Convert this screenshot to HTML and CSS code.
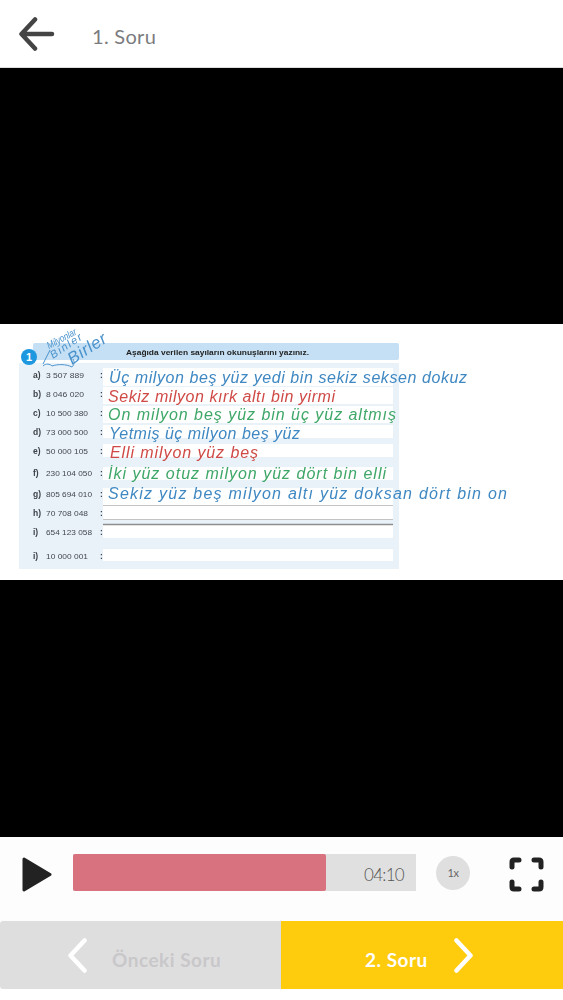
FILE: index.html
```html
<!DOCTYPE html>
<html lang="tr">
<head>
<meta charset="utf-8">
<title>1. Soru</title>
<link rel="stylesheet" href="styles.css">
</head>
<body>
<div class="app">
  <header class="topbar">
    <svg class="back" viewBox="0 0 36 34"><path d="M33 17H3M16 2.500L2.500 17L16 31.500"/></svg>
    <span class="title">1. Soru</span>
  </header>
  <main class="video">
    <svg class="sheet" viewBox="0 0 563 256">
      <rect class="panel" x="19" y="39" width="380" height="206"/>
      <rect class="band" x="33" y="19" width="366" height="17" rx="2"/>
      <rect class="box" x="103" y="44" width="290" height="18"/>
      <rect class="box" x="103" y="63" width="290" height="17"/>
      <rect class="box" x="103" y="82" width="290" height="17"/>
      <rect class="box" x="103" y="101" width="290" height="13"/>
      <rect class="box" x="103" y="120" width="290" height="13"/>
      <rect class="box" x="103" y="143" width="290" height="13"/>
      <rect class="box" x="103" y="164" width="290" height="17"/>
      <rect class="box" x="103" y="182" width="290" height="13"/>
      <rect class="box" x="103" y="201" width="290" height="13"/>
      <rect class="box" x="103" y="225" width="290" height="12"/>
      <path class="rule" d="M103 181.500H393M103 195.500H393"/>
      <path class="rule-dark" d="M103 200.500H393"/>
      <circle class="badge" cx="29" cy="33" r="8"/>
      <text class="badge-num" x="29" y="37" text-anchor="middle">1</text>
      <text class="heading" x="126" y="31" textLength="183" lengthAdjust="spacingAndGlyphs">Aşağıda verilen sayıların okunuşlarını yazınız.</text>

      <g class="labels">
        <text x="33" y="54">a)</text><text class="num" x="46" y="54" textLength="38" lengthAdjust="spacingAndGlyphs">3 507 889</text><text x="100" y="54">:</text>
        <text x="33" y="73">b)</text><text class="num" x="46" y="73" textLength="38" lengthAdjust="spacingAndGlyphs">8 046 020</text><text x="100" y="73">:</text>
        <text x="33" y="92">c)</text><text class="num" x="46" y="92" textLength="42" lengthAdjust="spacingAndGlyphs">10 500 380</text><text x="100" y="92">:</text>
        <text x="33" y="111">d)</text><text class="num" x="46" y="111" textLength="42" lengthAdjust="spacingAndGlyphs">73 000 500</text><text x="100" y="111">:</text>
        <text x="33" y="130">e)</text><text class="num" x="46" y="130" textLength="42" lengthAdjust="spacingAndGlyphs">50 000 105</text><text x="100" y="130">:</text>
        <text x="33" y="152">f)</text><text class="num" x="46" y="152" textLength="46" lengthAdjust="spacingAndGlyphs">230 104 050</text><text x="100" y="152">:</text>
        <text x="33" y="173">g)</text><text class="num" x="46" y="173" textLength="46" lengthAdjust="spacingAndGlyphs">805 694 010</text><text x="100" y="173">:</text>
        <text x="33" y="192">h)</text><text class="num" x="46" y="192" textLength="42" lengthAdjust="spacingAndGlyphs">70 708 048</text><text x="100" y="192">:</text>
        <text x="33" y="211">i)</text><text class="num" x="46" y="211" textLength="46" lengthAdjust="spacingAndGlyphs">654 123 058</text><text x="100" y="211">:</text>
        <text x="33" y="235">i)</text><text class="num" x="46" y="235" textLength="42" lengthAdjust="spacingAndGlyphs">10 000 001</text><text x="100" y="235">:</text>
      </g>

      <g class="hand">
        <text class="blue" x="109" y="59" textLength="358">Üç milyon beş yüz yedi bin sekiz seksen dokuz</text>
        <text class="red" x="108" y="78" textLength="227">Sekiz milyon kırk altı bin yirmi</text>
        <text class="green" x="108" y="96" textLength="288">On milyon beş yüz bin üç yüz altmış</text>
        <text class="blue" x="109" y="115" textLength="191">Yetmiş üç milyon beş yüz</text>
        <text class="red" x="110" y="134" textLength="148">Elli milyon yüz beş</text>
        <text class="green" x="108" y="155" textLength="278">İki yüz otuz milyon yüz dört bin elli</text>
        <text class="blue" x="108" y="175" textLength="399">Sekiz yüz beş milyon altı yüz doksan dört bin on</text>
      </g>

      <g class="notes">
        <text class="note-xs" transform="translate(49 25) rotate(-28)" textLength="32" lengthAdjust="spacingAndGlyphs">Milyonlar</text>
        <text class="note-s" transform="translate(53 35) rotate(-34)" textLength="36">Binler</text>
        <text class="note-l" transform="translate(72 41) rotate(-33)" textLength="43">Birler</text>
        <path class="note-line" d="M43 40L50 26M43 42C46 39 50 40 52 42C58 40 66 40 72 43C74 41 75 38 73 35"/>
      </g>
    </svg>
  </main>
  <section class="controls">
    <svg class="play" viewBox="0 0 30 35"><path d="M2 2L28 17.500L2 33Z"/></svg>
    <div class="track">
      <div class="fill" style="width:73.700%"></div>
      <span class="time">04:10</span>
    </div>
    <div class="speed">1x</div>
    <svg class="full" viewBox="0 0 35 35"><path d="M3 10V5Q3 3 5 3H10M25 3H30Q32 3 32 5V10M3 25V30Q3 32 5 32H10M25 32H30Q32 32 32 30V25"/></svg>
  </section>
  <nav class="pager">
    <div class="pg prev">
      <svg class="chev" viewBox="0 0 19 35"><path d="M16.500 2.500L2.500 17.500L16.500 32.500"/></svg>
      <span class="pg-label">Önceki Soru</span>
    </div>
    <div class="pg next">
      <span class="pg-label">2. Soru</span>
      <svg class="chev" viewBox="0 0 19 35"><path d="M2.500 2.500L16.500 17.500L2.500 32.500"/></svg>
    </div>
  </nav>
</div>
</body>
</html>
```
FILE: styles.css
```css
* { box-sizing: border-box; }
html, body { margin: 0; padding: 0; }
body { background: #fff; font-family: Lato, "Open Sans", sans-serif; }
.app { width: 563px; height: 1000px; display: flex; flex-direction: column; background: #fff; overflow: hidden; }

.topbar { height: 68px; display: flex; align-items: center; padding-left: 19px; border-bottom: 1px solid #ddd; background: #fff; }
.back { width: 36px; height: 34px; margin-right: 37px; }
.back path { fill: none; stroke: #444; stroke-width: 4.500; stroke-linecap: round; stroke-linejoin: round; }
.title { font-size: 20px; color: #7b7b7e; letter-spacing: .3px; margin-top: 5px; }

.video { height: 769px; background: #000; display: flex; align-items: center; padding-bottom: 1px; }
.sheet { display: block; width: 563px; height: 256px; background: #fff; }
.panel { fill: #e9f2f9; }
.band { fill: #c5e0f4; }
.box { fill: #fff; }
.rule { stroke: #c4c4c4; stroke-width: 1; fill: none; }
.rule-dark { stroke: #8e8e8e; stroke-width: 1.500; fill: none; }
.badge { fill: #1c97e0; }
.badge-num { font: 700 11px "Liberation Sans", sans-serif; fill: #fff; }
.heading { font: 700 8px "Liberation Sans", sans-serif; fill: #222; filter: blur(.3px); }
.labels { filter: blur(.35px); }
.labels text { font: 700 8.500px "Liberation Sans", sans-serif; fill: #3d4248; }
.labels .num { font-size: 8px; font-weight: 400; fill: #44484e; }
.hand { filter: blur(.4px); }
.hand text { font: italic 400 16px "Liberation Sans", sans-serif; }
.blue { fill: #3f88c2; }
.red { fill: #cf4a46; }
.green { fill: #3fa768; }
.notes { filter: blur(.4px); }
.note-xs { font: italic 400 10px "Liberation Sans", sans-serif; fill: #4a92cc; }
.note-s { font: italic 400 11px "Liberation Sans", sans-serif; fill: #4a92cc; }
.note-l { font: italic 400 17px "Liberation Sans", sans-serif; fill: #4a92cc; }
.note-line { fill: none; stroke: #4a92cc; stroke-width: 1; }

.controls { height: 84px; display: flex; align-items: center; padding: 0 19px 13px 22px; background: #fdfdfe; }
.play { width: 30px; height: 35px; margin: 3px 21px 0 0; }
.play path { fill: #222; stroke: #222; stroke-width: 3; stroke-linejoin: round; }
.track { position: relative; width: 343px; height: 37px; background: #e0e0e0; display: flex; align-items: center; justify-content: flex-end; padding-right: 12px; }
.fill { position: absolute; left: 0; top: 0; bottom: 0; background: #d9727f; border-radius: 2px; }
.time { font-size: 17px; font-weight: 300; color: #555; letter-spacing: -.7px; margin-top: 4px; }
.speed { width: 34px; height: 34px; border-radius: 50%; background: #e0dfe0; color: #666; font-size: 11px; letter-spacing: -.5px; display: flex; align-items: center; justify-content: center; margin-left: 20px; }
.full { width: 35px; height: 35px; margin: 3px 0 0 39px; }
.full path { fill: none; stroke: #222; stroke-width: 5; stroke-linecap: round; }

.pager { height: 68px; display: flex; }
.pg { display: flex; align-items: center; font-size: 19px; font-weight: 700; }
.pg-label { margin-top: 9px; letter-spacing: .5px; }
.prev { flex: 0 0 281px; background: #dfdedf; color: #c8c7c9; padding-left: 68px; border-radius: 3px 0 0 3px; gap: 25px; }
.next { flex: 1; background: #fecb0d; color: #fff; padding-left: 84px; gap: 26px; }
.chev { width: 19px; height: 35px; }
.chev path { fill: none; stroke: #fff; stroke-width: 4.500; stroke-linecap: round; stroke-linejoin: round; }
```
